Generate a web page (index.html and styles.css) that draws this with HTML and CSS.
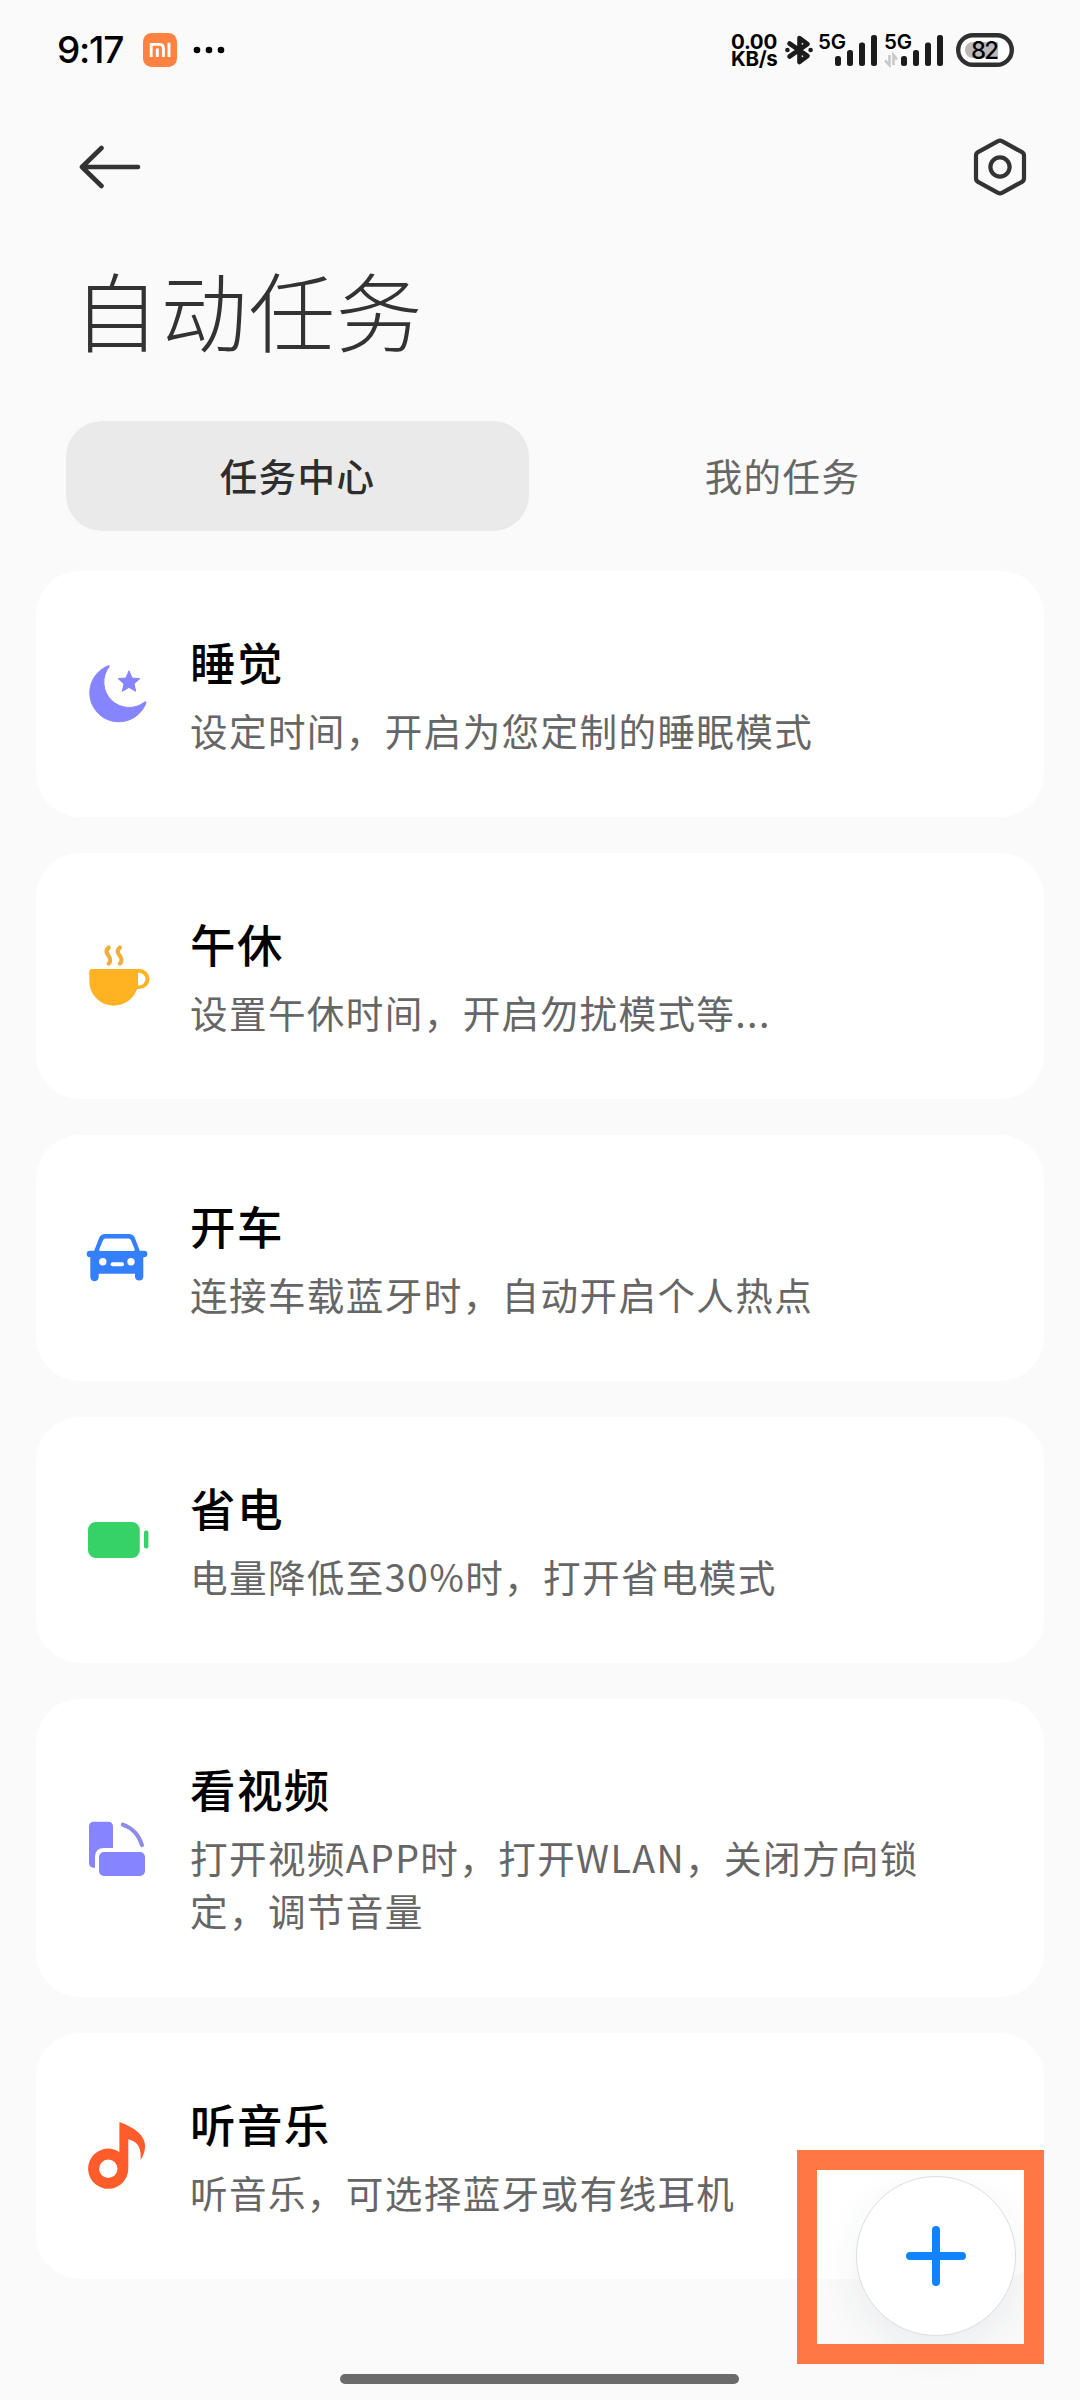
FILE: index.html
```html
<!DOCTYPE html>
<html lang="zh-CN">
<head>
<meta charset="utf-8">
<title>自动任务</title>
<link rel="stylesheet" href="styles.css">
</head>
<body>
<div class="screen">
  <header class="status">
    <span class="clock">9:17</span>
    <svg class="mi" width="34" height="34" viewBox="0 0 34 34">
      <rect width="34" height="34" rx="8.5" fill="#ff8243"/>
      <path d="M8.2 24V11.4H16.4Q20.4 11.4 20.4 15.4V24M14.3 15.4V24M26 9.8V24" fill="none" stroke="#fff" stroke-width="2.9"/>
    </svg>
    <svg class="more" width="32" height="8" viewBox="0 0 32 8">
      <circle cx="4" cy="4" r="3.3"/><circle cx="16" cy="4" r="3.3"/><circle cx="28" cy="4" r="3.3"/>
    </svg>
    <div class="speed"><span>0.00</span><span>KB/s</span></div>
    <svg class="bt" width="28" height="32" viewBox="0 0 28 32">
      <path d="M4.5 9.5L22.5 22 14.5 28V4L22.5 10 4.5 22.5" fill="none" stroke="#1c1c1c" stroke-width="4.6" stroke-linejoin="round" stroke-linecap="round"/>
      <circle cx="2.4" cy="16" r="2.3" fill="#1c1c1c"/><circle cx="25.6" cy="16" r="2.3" fill="#1c1c1c"/>
    </svg>
    <svg class="signal" width="60" height="54" viewBox="0 -10 60 54">
      <text x="0" y="15.8" textLength="28">5G</text>
      <rect x="17" y="23" width="6" height="10" rx="2.5"/><rect x="29" y="17" width="6" height="16" rx="2.5"/>
      <rect x="41" y="9.5" width="6" height="23.5" rx="2.5"/><rect x="53" y="2" width="6" height="31" rx="2.5"/>
    </svg>
    <svg class="signal second" width="60" height="54" viewBox="0 -10 60 54">
      <path d="M5.5 22V32L1 27.5M9.5 32V22L13 26.5" fill="none" stroke="#c9c9c9" stroke-width="2.6"/>
      <text x="0" y="15.8" textLength="28">5G</text>
      <rect x="17" y="23" width="6" height="10" rx="2.5"/><rect x="29" y="17" width="6" height="16" rx="2.5"/>
      <rect x="41" y="9.5" width="6" height="23.5" rx="2.5"/><rect x="53" y="2" width="6" height="31" rx="2.5"/>
    </svg>
    <svg class="battery" width="58" height="34" viewBox="0 0 58 34">
      <rect x="2.2" y="2.2" width="53.6" height="29.6" rx="14.8" fill="#fff" stroke="#303030" stroke-width="4.4"/>
      <path d="M42 9V25H17A8 8 0 0 1 17 9Z" fill="#b9b9b9"/>
      <text x="29" y="26" text-anchor="middle" textLength="28">82</text>
    </svg>
  </header>

  <nav class="toolbar">
    <svg width="64" height="44" viewBox="0 0 64 44" fill="none" stroke="#333" stroke-width="4.6" stroke-linecap="round" stroke-linejoin="round">
      <path d="M60 22H4M23.5 3L4 22L23.5 41"/>
    </svg>
    <svg width="56" height="60" viewBox="0 0 56 60" fill="none" stroke="#333" stroke-width="4.2">
      <path d="M26 4.2Q28 3 30 4.2L50 15.2Q52 16.3 52 18.5V41.5Q52 43.7 50 44.8L30 55.8Q28 57 26 55.8L6 44.8Q4 43.7 4 41.5V18.5Q4 16.3 6 15.2Z"/>
      <circle cx="28" cy="30" r="9.6"/>
    </svg>
  </nav>

  <h1 class="heading">自动任务</h1>

  <div class="tabs">
    <div class="tab active">任务中心</div>
    <div class="tab">我的任务</div>
  </div>

  <main class="cards">
    <section class="card">
      <svg class="icon" viewBox="0 0 72 72" fill="#8685ff">
        <path d="M27.7 7.6A29 29 0 1 0 65 44.8Q65.2 43.4 63.8 44A25.3 25.3 0 0 1 28 8.8Q28.6 7.4 27.7 7.6Z" stroke="#8685ff" stroke-width="1"/>
        <path d="M48 12.8L51.1 20 58.8 20.7 53 25.8 54.7 33.3 48 29.4 41.3 33.3 43 25.8 37.2 20.7 44.9 20Z" stroke="#8685ff" stroke-linejoin="round"/>
      </svg>
      <div class="text"><h2>睡觉</h2><p>设定时间，开启为您定制的睡眠模式</p></div>
    </section>
    <section class="card">
      <svg class="icon" viewBox="0 0 72 72" fill="#ffb222">
        <path fill-rule="evenodd" d="M8.3 31.5Q8.3 29 10.8 29H58.5A10 10 0 0 1 58.5 49H56A24.5 24.5 0 0 1 8.3 41.5ZM57 32.8V45.4H58.2A6.3 6.3 0 0 0 58.2 32.8Z"/>
        <path d="M27.7 7.6C20.5 14 34 17 27.7 23.6M38.9 7.6C31.7 14 45.2 17 38.9 23.6" fill="none" stroke="#f0ad3c" stroke-width="4.2" stroke-linecap="round"/>
      </svg>
      <div class="text"><h2>午休</h2><p>设置午休时间，开启勿扰模式等...</p></div>
    </section>
    <section class="card">
      <svg class="icon" viewBox="0 0 72 72" fill="#347ffc">
        <path fill-rule="evenodd" d="M24 12H48Q52 12 53.7 15.5L58.8 28.7H63A3.3 3.3 0 0 1 63 35.3H62.3V55A4.2 4.2 0 0 1 54 55V51.7H17.7V55A4.2 4.2 0 0 1 9.3 55V35.3H9A3.3 3.3 0 0 1 9 28.7H13.2L18.3 15.5Q20 12 24 12ZM24.5 16.5Q22.8 16.5 22 18.2L18.4 27Q17.8 29 19.6 29H52.4Q54.2 29 53.6 27L50 18.2Q49.2 16.5 47.5 16.5Z"/>
        <g fill="#fff"><circle cx="21.8" cy="39.8" r="3.7"/><circle cx="50" cy="39.8" r="3.7"/><rect x="29.6" y="40.2" width="13.4" height="4" rx="2"/></g>
      </svg>
      <div class="text"><h2>开车</h2><p>连接车载蓝牙时，自动开启个人热点</p></div>
    </section>
    <section class="card">
      <svg class="icon" viewBox="0 0 72 72" fill="#36d267">
        <rect x="7" y="18" width="51.8" height="36" rx="8"/><rect x="63" y="26.6" width="4.4" height="18" rx="2"/>
      </svg>
      <div class="text"><h2>省电</h2><p>电量降低至30%时，打开省电模式</p></div>
    </section>
    <section class="card tall">
      <svg class="icon" viewBox="0 0 72 72" fill="#8685ff">
        <path d="M13 9.7H27Q32 9.7 32 14.7V36H23Q14 36 14 45V56Q8 55.8 8 51V14.7Q8 9.7 13 9.7Z"/>
        <rect x="18" y="40" width="46" height="24" rx="5"/>
        <path d="M41.8 12.6Q56.5 17.8 61 33.2" fill="none" stroke="#8d8cea" stroke-width="4" stroke-linecap="round"/>
      </svg>
      <div class="text"><h2>看视频</h2><p>打开视频APP时，打开WLAN，关闭方向锁定，调节音量</p></div>
    </section>
    <section class="card">
      <svg class="icon" viewBox="0 0 72 72" fill="#ff5c2b">
        <path fill-rule="evenodd" d="M38.4 2C55 8 64 16 64.1 26Q64 33 59.6 40.2C60.5 28 57 21.5 47.3 19.3V48.7A20.1 20.1 0 1 1 38.4 32ZM27.3 39.5A9.2 9.2 0 1 0 27.3 57.9A9.2 9.2 0 1 0 27.3 39.5Z"/>
      </svg>
      <div class="text"><h2>听音乐</h2><p>听音乐，可选择蓝牙或有线耳机</p></div>
    </section>
  </main>

  <button class="fab" aria-label="添加">
    <svg width="60" height="60" viewBox="0 0 60 60"><path d="M30 4V56M4 30H56" stroke="#1183ff" stroke-width="8" stroke-linecap="round"/></svg>
  </button>
  <div class="highlight"></div>
  <div class="home-bar"></div>
</div>
</body>
</html>
```
FILE: styles.css
```css
* { box-sizing: border-box; }
body { margin: 0; background: #fafafa; }
svg { display: block; flex: none; }

.screen {
  position: relative;
  width: 1080px;
  height: 2400px;
  overflow: hidden;
  background: #fafafa;
  font-family: "Noto Sans CJK SC", sans-serif;
  color: #000;
}

.status {
  display: flex;
  align-items: center;
  height: 100px;
  padding: 0 66px 0 57px;
  font-family: Inter, "Noto Sans CJK SC", sans-serif;
}
.clock {
  width: 86px;
  font-size: 37px;
  font-weight: 500;
  line-height: 44px;
  letter-spacing: -1.2px;
}
.more { margin-left: 16px; }
.speed {
  display: flex;
  flex-direction: column;
  width: 54px;
  margin-left: auto;
  font-size: 20.5px;
  font-weight: 700;
  line-height: 17.5px;
  letter-spacing: -0.3px;
}
.bt { margin-right: 5px; }
.signal { margin-right: 6px; }
.signal.second { margin-right: 12px; }
.signal { fill: #1c1c1c; }
.signal text { fill: #000; font-size: 20.5px; font-weight: 600; }
.battery text { font-size: 24px; font-weight: 500; }

.toolbar {
  display: flex;
  align-items: center;
  justify-content: space-between;
  height: 134px;
  padding: 0 52px 0 78px;
}

.heading {
  margin: 0;
  height: 187px;
  padding: 15px 0 0 73px;
  font-size: 86.5px;
  font-weight: 300;
  line-height: 120px;
  letter-spacing: 1.2px;
  color: #333;
}

.tabs {
  display: flex;
  gap: 22px;
  padding: 0 66px;
}
.tab {
  flex: 1;
  height: 110px;
  border-radius: 36px;
  text-align: center;
  font-size: 37.5px;
  line-height: 107px;
  letter-spacing: 1.4px;
  color: #666;
}
.tab.active {
  background: #eaeaea;
  color: #2d2d2d;
  font-weight: 500;
}

.cards {
  display: flex;
  flex-direction: column;
  gap: 36px;
  padding: 40px 36px 0;
}
.card {
  display: flex;
  align-items: center;
  gap: 37px;
  height: 246px;
  padding: 0 50px 0 45px;
  border-radius: 44px;
  background: #fff;
}
.card.tall { height: 298px; }
.icon { width: 72px; height: 72px; }
.text { width: 750px; padding-bottom: 5px; }
.card h2 {
  margin: 0 0 9px;
  font-size: 45.5px;
  font-weight: 500;
  line-height: 68px;
  letter-spacing: 1.4px;
}
.card p {
  margin: 0;
  font-size: 37.6px;
  line-height: 52.6px;
  letter-spacing: 1.37px;
  color: #666;
}

.fab {
  position: absolute;
  left: 856px;
  top: 2176px;
  display: flex;
  align-items: center;
  justify-content: center;
  width: 160px;
  height: 160px;
  padding: 0;
  border: 1px solid #dedede;
  border-radius: 50%;
  background: #fff;
  box-shadow: 0 14px 42px rgba(40, 60, 80, 0.07);
}
.highlight {
  position: absolute;
  left: 797px;
  top: 2150px;
  width: 247px;
  height: 214px;
  border: 20px solid #ff7744;
}
.home-bar {
  position: absolute;
  left: 340px;
  top: 2374px;
  width: 399px;
  height: 10px;
  border-radius: 5px;
  background: #6b6b6b;
}
```
